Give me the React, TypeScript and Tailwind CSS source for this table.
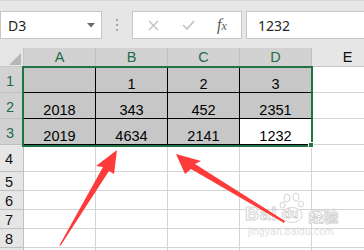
import React from "react";

const cols = ["A", "B", "C", "D", "E"];

const values: string[][] = [
  ["", "1", "2", "3"],
  ["2018", "343", "452", "2351"],
  ["2019", "4634", "2141", "1232"],
];

// rows 1..8 are labelled; a ninth row only peeks in at the bottom edge
const rowNums = [1, 2, 3, 4, 5, 6, 7, 8, 9];

const Toolbar = () => (
  <div className="flex h-[48px] items-start border-t border-[#d6d6d6] bg-[#e6e6e6] pt-[10px]">
    <div className="flex h-[28px] w-[102px] shrink-0 items-center justify-between border border-[#c6c6c6] bg-white pl-[7px] pr-[6px] text-[14px] text-[#262626] [font-family:'Noto_Sans',sans-serif]">
      <span>D3</span>
      <svg width="8" height="5" viewBox="0 0 8 5">
        <path d="M0 0h8L4 4.5z" fill="#6a6a6a" />
      </svg>
    </div>
    <div className="flex h-[28px] w-[30px] shrink-0 flex-col items-center justify-center gap-[3px]">
      <span className="h-[2px] w-[2px] bg-[#a8a8a8]" />
      <span className="h-[2px] w-[2px] bg-[#a8a8a8]" />
      <span className="h-[2px] w-[2px] bg-[#a8a8a8]" />
    </div>
    <div className="flex h-[28px] w-[110px] shrink-0 items-center border border-[#c6c6c6] bg-white">
      <div className="flex w-[38px] justify-center pl-[2px]">
        <svg width="11" height="11" viewBox="0 0 11 11">
          <path d="M1 1l9 9M10 1l-9 9" stroke="#c2c2c2" strokeWidth="1.4" />
        </svg>
      </div>
      <div className="flex w-[34px] justify-center">
        <svg width="13" height="10" viewBox="0 0 13 10">
          <path d="M1 5l4 4 7-8" stroke="#c2c2c2" strokeWidth="1.6" fill="none" />
        </svg>
      </div>
      <div className="flex w-[34px] justify-center text-[#595959] italic [font-family:'Liberation_Serif',serif]">
        <span className="text-[16px]">f</span>
        <span className="mt-[4px] text-[12px]">x</span>
      </div>
    </div>
    <div className="ml-[4px] flex h-[28px] flex-1 items-center border border-r-0 border-[#c6c6c6] bg-white pl-[11px] text-[14px] text-[#262626] [font-family:'Noto_Sans',sans-serif]">
      1232
    </div>
  </div>
);

const Watermark = () => (
  <div className="pointer-events-none absolute left-[245px] top-[192px] text-[#d9d9d9]">
    <div className="flex items-end">
      <span className="text-[19px] font-bold leading-none tracking-[1px] text-white [-webkit-text-stroke:1px_#d4d4d4] [font-family:'Liberation_Sans',sans-serif]">
        Bai
      </span>
      <div className="relative ml-[1px] h-[31px] w-[26px]">
        <svg className="absolute left-0 top-0" width="26" height="31" viewBox="0 0 26 31">
          <g fill="#fff" stroke="#d4d4d4" strokeWidth="1">
            <ellipse cx="8" cy="6" rx="3" ry="4" />
            <ellipse cx="17" cy="5" rx="3" ry="4" />
            <ellipse cx="3.5" cy="13" rx="2.5" ry="3" />
            <ellipse cx="22" cy="12" rx="2.5" ry="3" />
            <ellipse cx="13" cy="23" rx="10" ry="7.5" />
          </g>
        </svg>
        <span className="absolute left-[5px] top-[16px] text-[12px] font-bold leading-none text-white [-webkit-text-stroke:0.8px_#d0d0d0] [font-family:'Liberation_Sans',sans-serif]">
          du
        </span>
      </div>
      <span className="ml-[4px] text-[15px] font-bold leading-none text-white [-webkit-text-stroke:0.8px_#d0d0d0] [font-family:'Noto_Sans_CJK_SC',sans-serif]">
        经验
      </span>
    </div>
    <div className="mt-[4px] pl-[3px] text-[10px] leading-none tracking-[0.3px] text-[#dedede] [font-family:'Liberation_Sans',sans-serif]">
      jingyan.baidu.com
    </div>
  </div>
);

const Arrows = () => (
  <svg className="pointer-events-none absolute left-0 top-0" width="364" height="250" viewBox="0 0 364 250">
    <polygon
      points="117,150 96,166 103,167 59,246 61,245 109,171 114,174"
      fill="#fd3b3b"
    />
    <polygon
      points="176,154 185,174 191,169 284,223 285,221 195,164 201,161"
      fill="#fd3b3b"
    />
  </svg>
);

const Sheet = () => (
  <div className="relative grid grid-cols-[24px_72px_72px_72px_72px_72px] grid-rows-[19px_26px_26px_26px_27px_19px_19px_19px_19px_19px] text-[14.5px] leading-[16px] [font-family:'Liberation_Sans',sans-serif]">
    {/* corner */}
    <div className="relative border-r border-b border-[#c6c6c6] bg-[#e6e6e6]">
      <svg className="absolute left-[9px] top-[5px]" width="12" height="12" viewBox="0 0 12 12">
        <path d="M12 0v12H0z" fill="#b6b6b6" />
      </svg>
    </div>
    {cols.map((c, i) => (
      <div
        key={c}
        className={
          i < 4
            ? "flex items-center justify-center border-r border-b border-[#c0c0c0] bg-[#d2d2d2] text-[#1f6b4a]"
            : "flex items-center justify-center border-r border-b border-[#c6c6c6] bg-[#e6e6e6] text-[#111]"
        }
      >
        {c}
      </div>
    ))}

    {rowNums.map((r) => (
      <React.Fragment key={r}>
        <div
          className={
            r <= 3
              ? "flex items-center border-r border-b border-[#c0c0c0] bg-[#d2d2d2] pl-[6px] pt-[3px] text-[#1f6b4a]"
              : "flex items-center border-r border-b border-[#c0c0c0] bg-[#e6e6e6] pl-[5px] pt-[2px] text-[#111]"
          }
        >
          {r < 9 ? r : null}
        </div>
        {cols.map((c, ci) => {
          const inRange = r <= 3 && ci < 4;
          if (!inRange) {
            return <div key={c} className="border-r border-b border-[#d4d4d4] bg-white" />;
          }
          const white = r === 3 && ci === 3;
          return (
            <div
              key={c}
              className={
                white
                  ? "flex items-end justify-center border-r border-b border-black bg-white text-black"
                  : "flex items-end justify-center border-r border-b border-black bg-[#c7c7c7] text-black"
              }
            >
              {values[r - 1][ci]}
            </div>
          );
        })}
      </React.Fragment>
    ))}

    {/* selection frame + fill handle */}
    <div className="pointer-events-none absolute left-[22px] top-[18px] h-[81px] w-[291px] border-2 border-[#217346]" />
    <div className="pointer-events-none absolute left-[308px] top-[94px] h-[6px] w-[6px] border border-white bg-[#217346]" />
  </div>
);

export default function App() {
  return (
    <div className="relative h-[250px] w-[364px] overflow-hidden bg-white">
      <Toolbar />
      <Sheet />
      <Watermark />
      <Arrows />
    </div>
  );
}
